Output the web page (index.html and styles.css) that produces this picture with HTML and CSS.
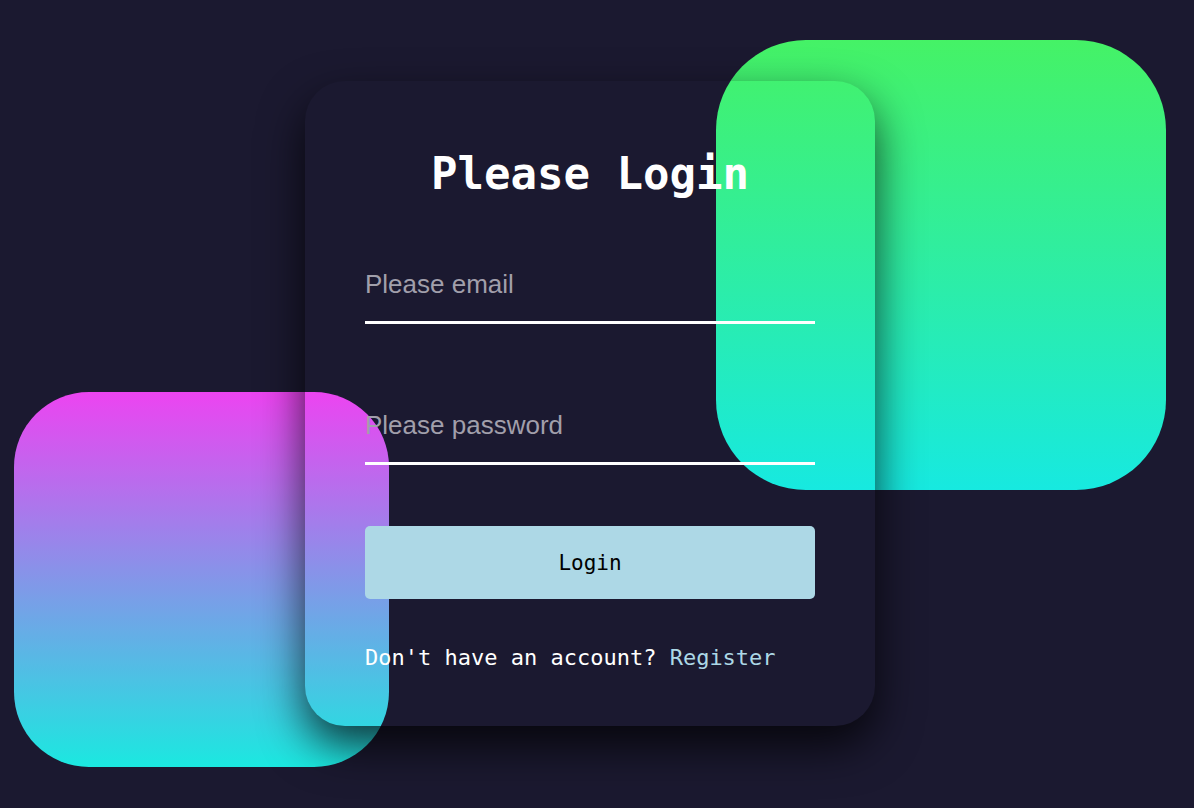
FILE: index.html
```html
<!DOCTYPE html>
<html lang="en">
<head>
<meta charset="utf-8">
<title>Please Login</title>
<link rel="stylesheet" href="styles.css">
</head>
<body>
<main class="stage">
  <div class="blob blob-green"></div>
  <div class="blob blob-pink"></div>
  <form class="card">
    <h1 class="title">Please Login</h1>
    <input class="field" type="email" placeholder="Please email">
    <input class="field field-password" type="password" placeholder="Please password">
    <button class="btn" type="button">Login</button>
    <p class="foot">Don't have an account? <a class="link" href="#">Register</a></p>
  </form>
</main>
</body>
</html>
```

FILE: styles.css
```css
* { box-sizing: border-box; }

html, body {
  margin: 0;
  height: 100%;
}

body {
  background: #1b1930;
  display: flex;
  justify-content: center;
  align-items: center;
  padding-right: 14px;
  padding-bottom: 1px;
  overflow: hidden;
}

.stage {
  position: relative;
  width: 570px;
  height: 645px;
}

.blob {
  position: absolute;
  border-radius: 20%;
}

.blob-green {
  left: 411px;
  top: -41px;
  width: 450px;
  height: 450px;
  background: linear-gradient(to bottom, #45f266, #17e9e0);
}

.blob-pink {
  left: -291px;
  top: 311px;
  width: 375px;
  height: 375px;
  background: linear-gradient(to bottom, #ec44f1, #1be8e0);
}

.card {
  position: relative;
  z-index: 1;
  width: 570px;
  height: 645px;
  padding: 67px 60px 55px;
  border-radius: 40px;
  background: transparent;
  box-shadow: 0 20px 45px rgba(0, 0, 0, 0.75);
  display: flex;
  flex-direction: column;
}

.title {
  margin: 0;
  font-family: "DejaVu Sans Mono", monospace;
  font-weight: bold;
  font-size: 44px;
  line-height: 52px;
  color: #ffffff;
  text-align: center;
}

.field {
  display: block;
  width: 100%;
  margin: 69px 0 0;
  height: 55px;
  padding: 0 0 22px;
  border: 0;
  border-bottom: 3px solid #ffffff;
  background: transparent;
  outline: none;
  font-family: "Liberation Sans", Arial, sans-serif;
  font-size: 26px;
  line-height: 30px;
  color: #ffffff;
}

.field-password {
  margin-top: 86px;
}

.field::placeholder {
  color: #a19fab;
}

.btn {
  margin-top: 61px;
  height: 73px;
  width: 100%;
  border: 0;
  border-radius: 5px;
  background: #add8e6;
  color: #000000;
  font-family: "DejaVu Sans Mono", monospace;
  font-size: 21px;
  cursor: pointer;
}

.foot {
  margin: 46px 0 0;
  font-family: "DejaVu Sans Mono", monospace;
  font-size: 22px;
  line-height: 26px;
  color: #ffffff;
}

.link {
  color: #add8e6;
  text-decoration: none;
}
```
